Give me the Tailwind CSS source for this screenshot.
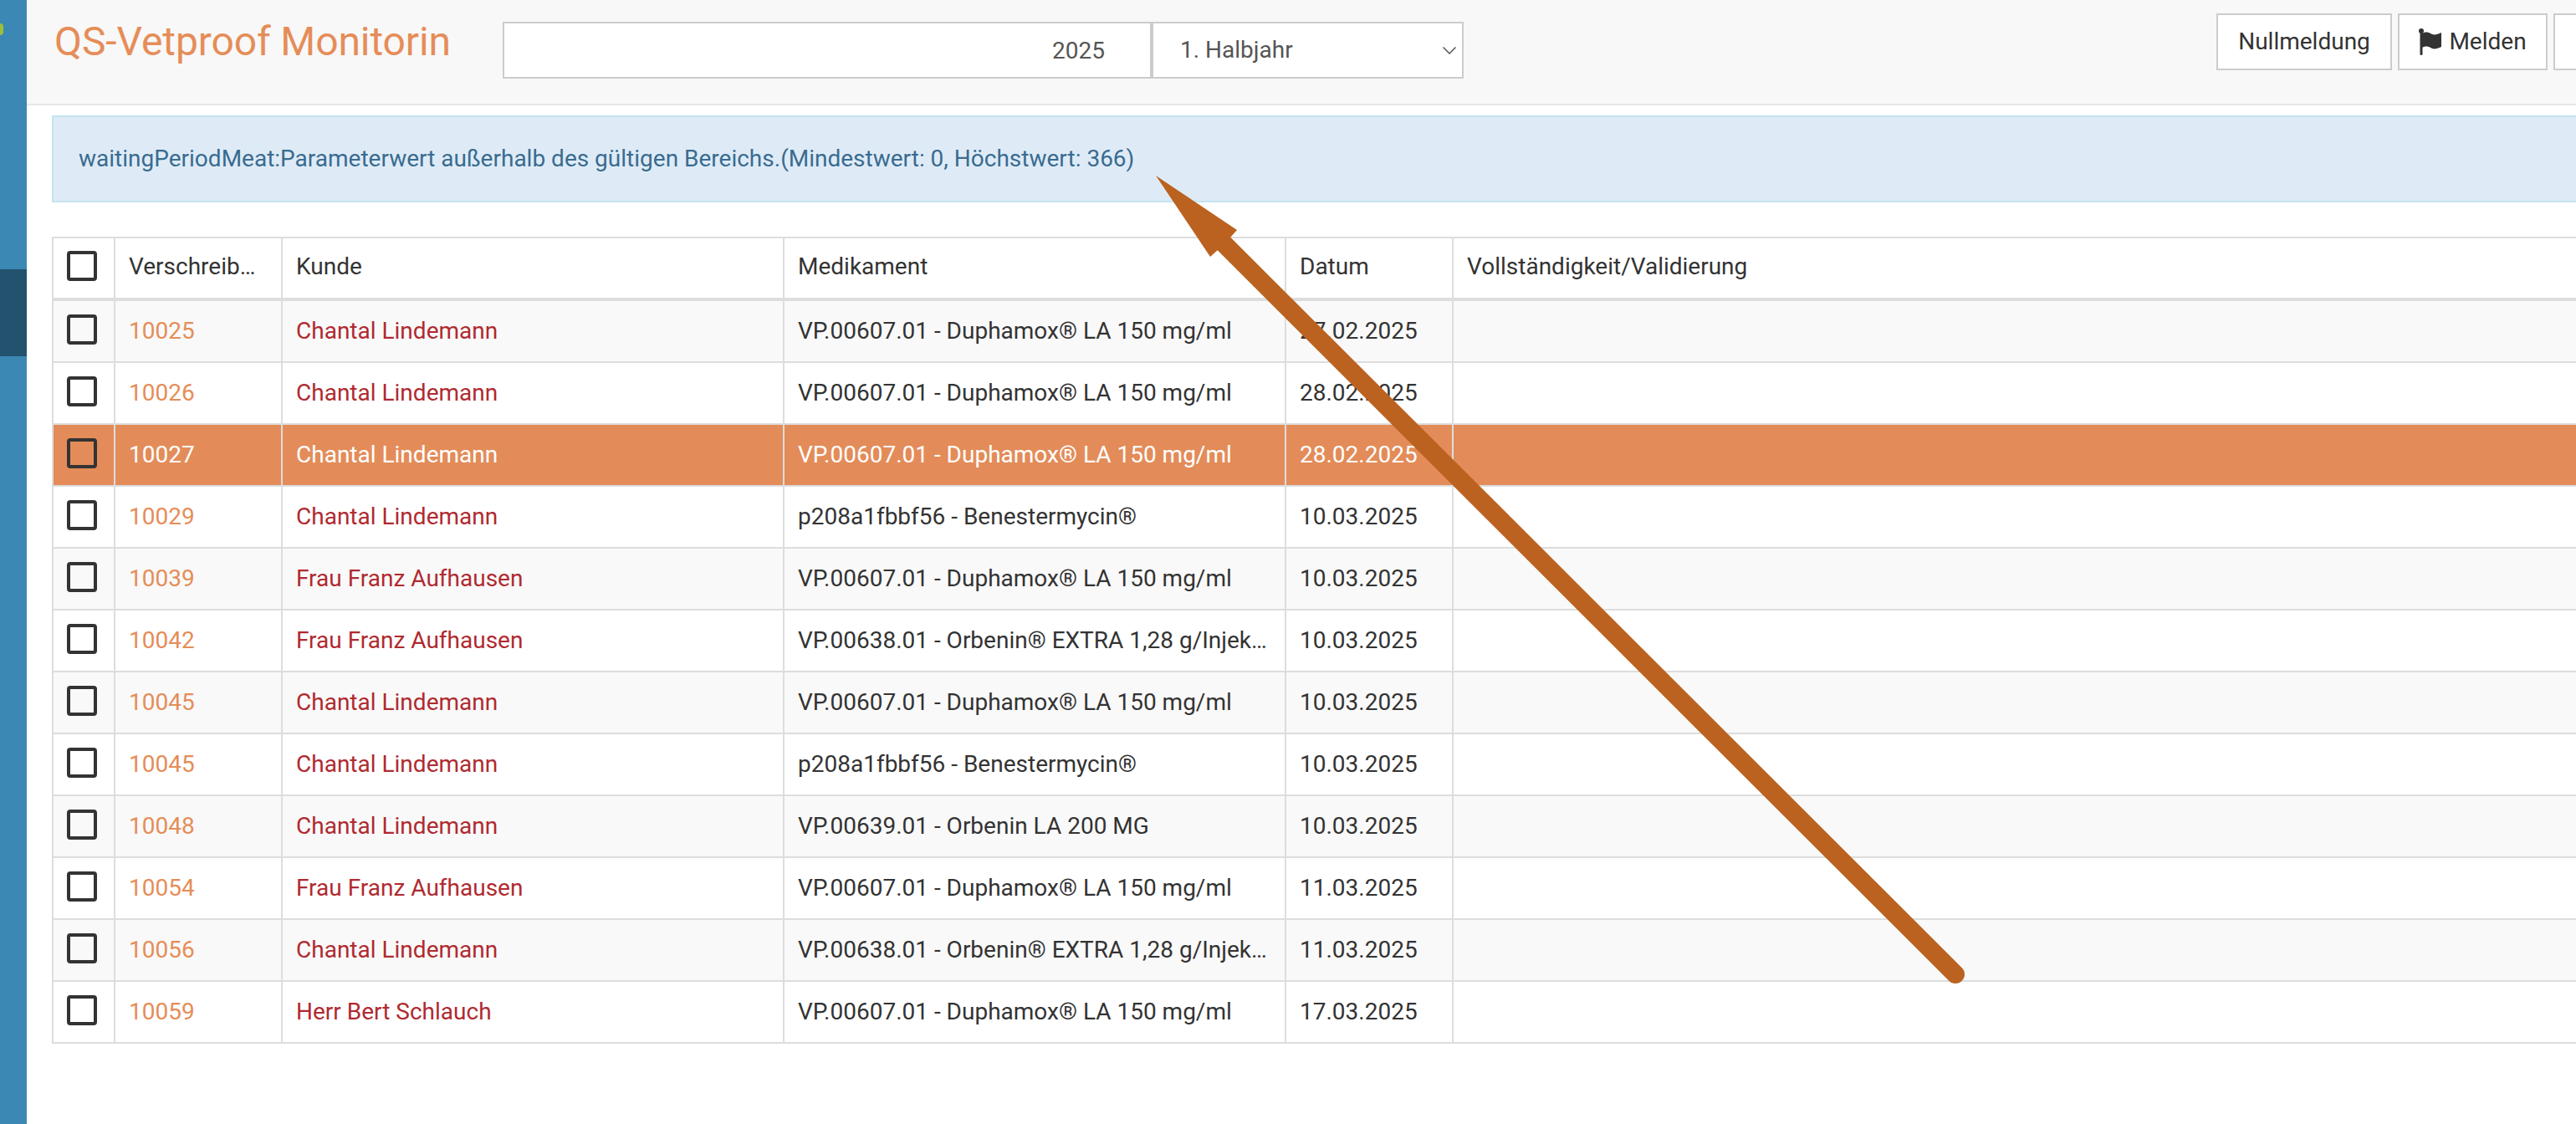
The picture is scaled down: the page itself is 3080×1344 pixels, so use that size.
<!DOCTYPE html>
<html lang="de">
<head>
    <meta charset="UTF-8">
    <title>QS-Vetproof Monitoring</title>
    <script src="https://cdn.jsdelivr.net/npm/@tailwindcss/browser@4"></script>
</head>
<body class="bg-white text-[#333] font-['Roboto',sans-serif] text-[28px] overflow-hidden">
    <div class="relative flex h-[1344px] w-[3080px] overflow-hidden">
        <aside class="w-[32px] shrink-0 bg-[#3c88b5] overflow-hidden">
            <div class="h-[14px] mt-[28px] mb-[280px] w-[4px] rounded-r-full bg-[#9dbf3a]"></div>
            <div class="h-[104px] bg-[#22526e]"></div>
        </aside>
        <main class="w-[3300px] shrink-0">
            <header class="h-[126px] bg-[#f8f8f8] border-b-2 border-[#e7e7e7] flex items-start">
                <h1 class="ml-[33px] w-[536px] shrink-0 mt-[20px] text-[48px] leading-[60px] tracking-[-0.1px] font-normal text-[#e58d58]">QS-Vetproof Monitorin</h1>
                <div class="mt-[26px] flex h-[68px]">
                    <input type="text" value="2025" class="w-[776px] h-full bg-white border-2 border-[#ccc] pr-[54px] text-right text-[28px] text-[#555] outline-none">
                    <div class="relative w-[373px] h-full">
                        <select class="appearance-none w-full h-full bg-white border-2 border-[#ccc] pl-[32px] text-[28px] text-[#555] outline-none">
                            <option>1. Halbjahr</option>
                        </select>
                        <svg class="absolute right-[9px] top-[30px]" width="16" height="9" viewBox="0 0 16 9" fill="none" stroke="#555" stroke-width="1.5"><path d="M.5.5 8 8 15.500.5"/></svg>
                    </div>
                </div>
                <div class="ml-[900px] mt-[16px] flex gap-[7px] text-[28px]">
                    <button class="h-[68px] w-[210px] bg-white border-2 border-[#ccc]">Nullmeldung</button>
                    <button class="h-[68px] w-[179px] bg-white border-2 border-[#ccc] flex items-center justify-center gap-[8px]">
                        <svg width="28" height="32" viewBox="0 0 28 32" fill="#333"><circle cx="3" cy="3" r="3"/><rect x="1.500" y="3" width="3" height="29" rx="1.500"/><path d="M4 6c3-2 7-2 10 0s7 2 13-1v17c-6 3-10 3-13 1s-7-2-10 0z"/></svg>
                        Melden
                    </button>
                    <button class="h-[68px] w-[100px] bg-white border-2 border-[#ccc]"></button>
                </div>
            </header>
            <div class="ml-[30px] mt-[12px] h-[104px] flex items-center pl-[30px] bg-[#deebf7] border-2 border-[#c4e4ee] text-[#3a6b8f]">waitingPeriodMeat:Parameterwert außerhalb des gültigen Bereichs.(Mindestwert: 0, Höchstwert: 366)</div>
            <table class="ml-[30px] mt-[41px] w-[3270px] table-fixed border-separate border-spacing-0 border-l-2 border-t-2 border-[#ddd] [&_td]:h-[74px] [&_td]:border-r-2 [&_td]:border-b-2 [&_td]:border-[#ddd] [&_td]:px-[16px] [&_td]:truncate [&_th]:h-[75px] [&_th]:border-r-2 [&_th]:border-b-4 [&_th]:border-[#ddd] [&_th]:px-[16px] [&_th]:pb-[3px] [&_th]:font-normal [&_th]:text-left [&_th]:truncate">
                <colgroup>
                    <col class="w-[74px]"><col class="w-[200px]"><col class="w-[600px]"><col class="w-[600px]"><col class="w-[200px]"><col>
                </colgroup>
                <thead>
                    <tr><th><input type="checkbox" class="appearance-none block size-[36px] mb-[2px] border-4 border-[#333] rounded-[4px]"></th><th>Verschreib…</th><th>Kunde</th><th>Medikament</th><th>Datum</th><th>Vollständigkeit/Validierung</th></tr>
                </thead>
                <tbody>
                    <tr class="bg-[#f9f9f9]"><td><input type="checkbox" class="appearance-none block size-[36px] mb-[4px] border-4 border-[#333] rounded-[4px]"></td><td class="text-[#e58d58]">10025</td><td class="text-[#b02a30]">Chantal Lindemann</td><td>VP.00607.01 - Duphamox® LA 150 mg/ml</td><td>27.02.2025</td><td></td></tr>
                    <tr><td><input type="checkbox" class="appearance-none block size-[36px] mb-[4px] border-4 border-[#333] rounded-[4px]"></td><td class="text-[#e58d58]">10026</td><td class="text-[#b02a30]">Chantal Lindemann</td><td>VP.00607.01 - Duphamox® LA 150 mg/ml</td><td>28.02.2025</td><td></td></tr>
                    <tr class="bg-[#e38c59] text-white"><td><input type="checkbox" class="appearance-none block size-[36px] mb-[4px] border-4 border-[#333] rounded-[4px]"></td><td>10027</td><td>Chantal Lindemann</td><td>VP.00607.01 - Duphamox® LA 150 mg/ml</td><td>28.02.2025</td><td></td></tr>
                    <tr><td><input type="checkbox" class="appearance-none block size-[36px] mb-[4px] border-4 border-[#333] rounded-[4px]"></td><td class="text-[#e58d58]">10029</td><td class="text-[#b02a30]">Chantal Lindemann</td><td>p208a1fbbf56 - Benestermycin®</td><td>10.03.2025</td><td></td></tr>
                    <tr class="bg-[#f9f9f9]"><td><input type="checkbox" class="appearance-none block size-[36px] mb-[4px] border-4 border-[#333] rounded-[4px]"></td><td class="text-[#e58d58]">10039</td><td class="text-[#b02a30]">Frau Franz Aufhausen</td><td>VP.00607.01 - Duphamox® LA 150 mg/ml</td><td>10.03.2025</td><td></td></tr>
                    <tr><td><input type="checkbox" class="appearance-none block size-[36px] mb-[4px] border-4 border-[#333] rounded-[4px]"></td><td class="text-[#e58d58]">10042</td><td class="text-[#b02a30]">Frau Franz Aufhausen</td><td>VP.00638.01 - Orbenin® EXTRA 1,28 g/Injek…</td><td>10.03.2025</td><td></td></tr>
                    <tr class="bg-[#f9f9f9]"><td><input type="checkbox" class="appearance-none block size-[36px] mb-[4px] border-4 border-[#333] rounded-[4px]"></td><td class="text-[#e58d58]">10045</td><td class="text-[#b02a30]">Chantal Lindemann</td><td>VP.00607.01 - Duphamox® LA 150 mg/ml</td><td>10.03.2025</td><td></td></tr>
                    <tr><td><input type="checkbox" class="appearance-none block size-[36px] mb-[4px] border-4 border-[#333] rounded-[4px]"></td><td class="text-[#e58d58]">10045</td><td class="text-[#b02a30]">Chantal Lindemann</td><td>p208a1fbbf56 - Benestermycin®</td><td>10.03.2025</td><td></td></tr>
                    <tr class="bg-[#f9f9f9]"><td><input type="checkbox" class="appearance-none block size-[36px] mb-[4px] border-4 border-[#333] rounded-[4px]"></td><td class="text-[#e58d58]">10048</td><td class="text-[#b02a30]">Chantal Lindemann</td><td>VP.00639.01 - Orbenin LA 200 MG</td><td>10.03.2025</td><td></td></tr>
                    <tr><td><input type="checkbox" class="appearance-none block size-[36px] mb-[4px] border-4 border-[#333] rounded-[4px]"></td><td class="text-[#e58d58]">10054</td><td class="text-[#b02a30]">Frau Franz Aufhausen</td><td>VP.00607.01 - Duphamox® LA 150 mg/ml</td><td>11.03.2025</td><td></td></tr>
                    <tr class="bg-[#f9f9f9]"><td><input type="checkbox" class="appearance-none block size-[36px] mb-[4px] border-4 border-[#333] rounded-[4px]"></td><td class="text-[#e58d58]">10056</td><td class="text-[#b02a30]">Chantal Lindemann</td><td>VP.00638.01 - Orbenin® EXTRA 1,28 g/Injek…</td><td>11.03.2025</td><td></td></tr>
                    <tr><td><input type="checkbox" class="appearance-none block size-[36px] mb-[4px] border-4 border-[#333] rounded-[4px]"></td><td class="text-[#e58d58]">10059</td><td class="text-[#b02a30]">Herr Bert Schlauch</td><td>VP.00607.01 - Duphamox® LA 150 mg/ml</td><td>17.03.2025</td><td></td></tr>
                </tbody>
            </table>
        </main>
        <!-- annotation arrow drawn over the page -->
        <svg class="absolute left-0 top-0 pointer-events-none" width="3080" height="1344" viewBox="0 0 3080 1344">
            <line x1="1463" y1="291" x2="2338" y2="1165" stroke="#bb6220" stroke-width="22" stroke-linecap="round"/>
            <polygon points="1382,210 1479,275 1471,284 1456,299 1447,307" fill="#bb6220"/>
        </svg>
    </div>
</body>
</html>
